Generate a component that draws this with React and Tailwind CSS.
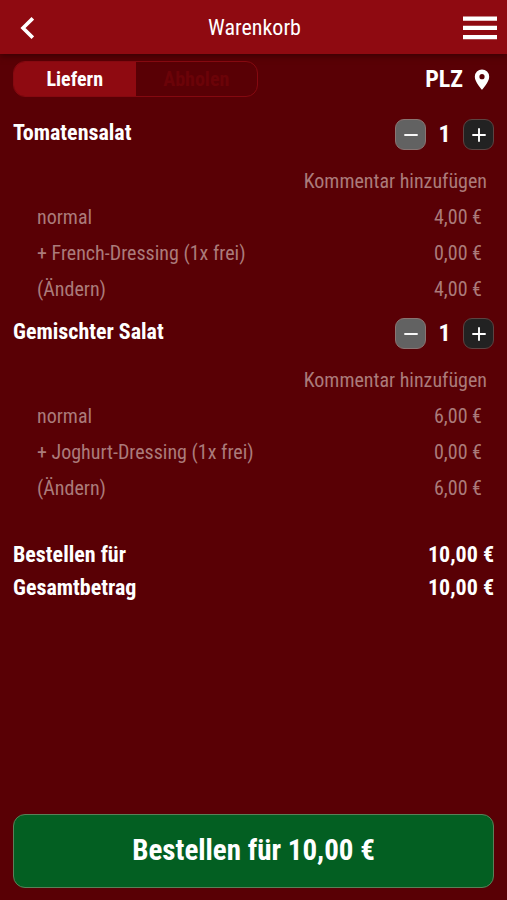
import { useState } from 'react';

const startItems = [
  { id: 1, name: "Tomatensalat", price: 4, extra: "French-Dressing", count: 1 },
  { id: 2, name: "Gemischter Salat", price: 6, extra: "Joghurt-Dressing", count: 1 },
];

function formatPrice(value) {
  return value.toFixed(2).replace(".", ",") + " €";
}

function CartItem({ item, onChange }) {
  const sum = formatPrice(item.price * item.count);

  return (
    <li>
      <div className="flex items-start justify-between">
        <h2 className="text-[22px] leading-7 font-bold">{item.name}</h2>
        <div className="flex items-center">
          <button
            type="button"
            aria-label="Weniger"
            onClick={() => onChange(item.id, -1)}
            className="flex size-[31px] items-center justify-center rounded-[9px] border border-[#8a7472] bg-[#626262]"
          >
            <svg viewBox="0 0 14 14" className="size-[14px]" fill="none" stroke="currentColor" strokeWidth="1.9">
              <path d="M0.3 7h13.4" />
            </svg>
          </button>
          <span className="w-[37px] text-center text-2xl leading-[31px] font-bold">{item.count}</span>
          <button
            type="button"
            aria-label="Mehr"
            onClick={() => onChange(item.id, 1)}
            className="flex size-[31px] items-center justify-center rounded-[9px] border border-[#5c4442] bg-[#222222]"
          >
            <svg viewBox="0 0 14 14" className="size-[14px]" fill="none" stroke="currentColor" strokeWidth="1.9">
              <path d="M0.3 7h13.4M7 0.3v13.4" />
            </svg>
          </button>
        </div>
      </div>

      <div className="mt-[13px] text-xl leading-9 text-[#ab7b7b]">
        <div className="flex justify-end pr-[7px]">
          <button type="button">Kommentar hinzufügen</button>
        </div>
        <div className="flex justify-between pr-3 pl-6">
          <span>normal</span>
          <span>{sum}</span>
        </div>
        <div className="flex justify-between pr-3 pl-6">
          <span>+ {item.extra} (1x frei)</span>
          <span>{formatPrice(0)}</span>
        </div>
        <div className="flex justify-between pr-3 pl-6">
          <button type="button">(Ändern)</button>
          <span>{sum}</span>
        </div>
      </div>
    </li>
  );
}

function App() {
  const [items, setItems] = useState(startItems);
  const total = formatPrice(items.reduce((sum, item) => sum + item.price * item.count, 0));

  function handleChange(id, step) {
    const updatedItems = items.map(item =>
      item.id === id ? { ...item, count: Math.max(0, item.count + step) } : item
    );
    setItems(updatedItems.filter(item => item.count > 0));
  }

  return (
    <div className="flex min-h-screen flex-col bg-[#590005] font-['Roboto_Condensed',Roboto,sans-serif] text-white">
      <header className="grid h-[54px] grid-cols-[1fr_auto_1fr] items-center bg-[#8f0a11] pt-[2px] pr-[10px] pl-3 shadow-[0_2px_6px_#3a0003]">
        <button type="button" aria-label="Zurück" className="w-7 justify-self-start pl-2">
          <svg viewBox="0 0 14 22" className="h-[22px] w-[14px]" fill="none" stroke="currentColor" strokeWidth="3.6">
            <path d="M12.8 1.3L3 11l9.8 9.7" />
          </svg>
        </button>
        <h1 className="text-[22px] leading-7">Warenkorb</h1>
        <button type="button" aria-label="Menü" className="justify-self-end">
          <svg viewBox="0 0 34 24" className="h-6 w-[34px]" fill="currentColor">
            <path d="M0 0.5h34v4.3H0zM0 9.8h34v4.3H0zM0 19h34v4.3H0z" />
          </svg>
        </button>
      </header>

      <main className="flex grow flex-col px-[13px] pt-[7px] pb-3">
        <div className="flex items-center justify-between">
          <div className="grid h-9 w-[245px] grid-cols-2 overflow-hidden rounded-xl border border-[#850910] text-xl font-bold">
            <button type="button" aria-pressed="true" className="bg-[#8f0a11]">Liefern</button>
            <button type="button" disabled className="text-[#6b0308]">Abholen</button>
          </div>
          <button type="button" className="flex items-center gap-[11px] pr-1 text-2xl leading-8 font-bold">
            PLZ
            <svg viewBox="0 0 16 21" className="h-[21px] w-4" fill="currentColor">
              <path
                fillRule="evenodd"
                d="M8 0.5a7.2 7.2 0 0 0-7.2 7.2C0.8 13.2 8 20.7 8 20.7s7.2-7.5 7.2-13A7.2 7.2 0 0 0 8 0.5zM8 10.3a2.6 2.6 0 1 1 0-5.2 2.6 2.6 0 0 1 0 5.2z"
              />
            </svg>
          </button>
        </div>

        <ul className="mt-[22px] space-y-[11px]">
          {items.map(item => (
            <CartItem key={item.id} item={item} onChange={handleChange} />
          ))}
        </ul>

        <dl className="mt-8 grid grid-cols-[1fr_auto] text-[22px] leading-[33px] font-bold">
          <dt>Bestellen für</dt>
          <dd>{total}</dd>
          <dt>Gesamtbetrag</dt>
          <dd>{total}</dd>
        </dl>

        <button
          type="button"
          className="mt-auto h-[74px] rounded-xl border border-[#5a8058] bg-[#035f22] text-[29px] font-bold"
        >
          Bestellen für {total}
        </button>
      </main>
    </div>
  );
}

export default App;
